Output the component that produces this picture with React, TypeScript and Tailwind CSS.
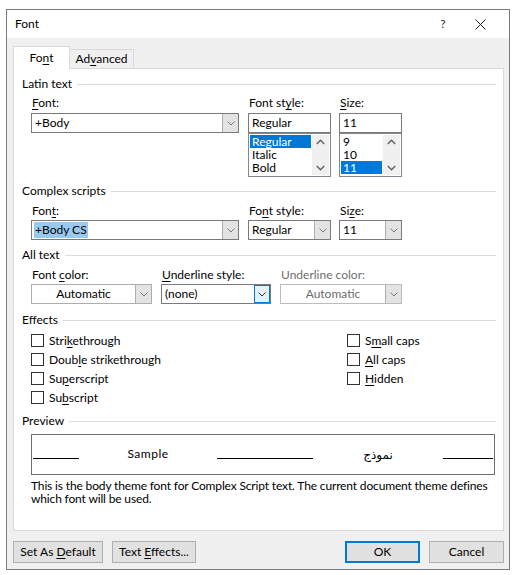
import React from "react";

const U = ({ children }: { children: React.ReactNode }) => (
  <span className="underline underline-offset-[2px] decoration-1">{children}</span>
);

const Chevron = ({ up = false, color = "#606060", big = false }: { up?: boolean; color?: string; big?: boolean }) =>
  big ? (
    <svg width="9" height="6" viewBox="0 0 9 6" className="block">
      <path d={up ? "M0.8 5L4.5 1.3L8.2 5" : "M0.8 1L4.5 4.7L8.2 1"} fill="none" stroke={color} strokeWidth="1.4" />
    </svg>
  ) : (
    <svg width="8" height="5" viewBox="0 0 8 5" className="block">
      <path d={up ? "M0.5 4L4 0.5L7.5 4" : "M0.5 0.5L4 4L7.5 0.5"} fill="none" stroke={color} strokeWidth="1" />
    </svg>
  );

interface ComboProps {
  text: string;
  className?: string;
  arrow?: boolean;
  center?: boolean;
  disabled?: boolean;
  focused?: boolean;
  selected?: boolean;
  light?: boolean;
}

const Combo = ({ text, className = "", arrow = true, center, disabled, focused, selected, light }: ComboProps) => (
  <div
    className={`h-[20px] flex bg-white border ${
      disabled ? "border-[#bcbcbc]" : light ? "border-[#adadad]" : "border-[#7a7a7a]"
    } ${className}`}
  >
    <div className={`flex-1 flex items-center ${center ? "justify-center" : "pl-[2px]"} ${disabled ? "text-[#6d6d6d]" : ""}`}>
      <span className={selected ? "bg-[#99c9ef] px-[1px] leading-[16px]" : "px-[1px]"}>{text}</span>
    </div>
    {arrow && (
      <div
        className={`w-[16px] flex items-center justify-center ${
          focused ? "bg-[#e5f1fb] border border-[#0078d7]" : "bg-[#e3e3e3] border-l border-[#adadad]"
        }`}
      >
        <Chevron color={focused ? "#333333" : "#7a7a7a"} />
      </div>
    )}
  </div>
);

const ListBox = ({ items, sel }: { items: string[]; sel: number }) => (
  <div className="h-[44px] border border-[#828790] bg-white flex">
    <div className="flex-1 pt-[1px] pl-[1px]">
      {items.map((it, i) => (
        <div
          key={it}
          className={`h-[13px] leading-[13px] pl-[2px] ${i === sel ? "bg-[#0078d7] text-white" : ""}`}
        >
          {it}
        </div>
      ))}
    </div>
    <div className="w-[17px] my-[1px] mx-[1px] bg-[#f0f0f0] flex flex-col items-center justify-between py-[4px]">
      <Chevron up big />
      <Chevron big />
    </div>
  </div>
);

const Header = ({ title, className = "" }: { title: string; className?: string }) => (
  <div className={`h-[16px] flex items-center pl-[8px] pr-[7px] ${className}`}>
    <span>{title}</span>
    <div className="flex-1 h-px bg-[#dcdcdc] ml-[5px]" />
  </div>
);

const Label = ({ children, disabled }: { children: React.ReactNode; disabled?: boolean }) => (
  <div className={`h-[16px] flex items-center pl-[1px] ${disabled ? "text-[#6d6d6d]" : ""}`}>
    <span>{children}</span>
  </div>
);

const Check = ({ children }: { children: React.ReactNode }) => (
  <div className="h-[19px] flex items-center">
    <div className="w-[13px] h-[13px] border border-[#333333] bg-white" />
    <span className="ml-[5px]">{children}</span>
  </div>
);

const Btn = ({ children, className = "", primary }: { children: React.ReactNode; className?: string; primary?: boolean }) => (
  <div
    className={`h-[22px] flex items-center justify-center bg-[#e1e1e1] ${
      primary ? "border-2 border-[#0078d7]" : "border border-[#adadad]"
    } ${className}`}
  >
    <span>{children}</span>
  </div>
);

export default function App() {
  return (
    <div className="w-[518px] h-[575px] bg-white pl-[6px] pt-[9px] font-['Lato','Noto_Sans',sans-serif] text-[12px] leading-none text-black">
      <div className="w-[504px] h-[561px] border border-[#7a7a7a] flex flex-col">
        {/* title bar */}
        <div className="h-[28px] bg-white flex items-center pl-[8px] pr-[19px]">
          <span className="flex-1">Font</span>
          <span className="w-[20px] text-center text-[#333333]">?</span>
          <div className="w-[20px] ml-[17px] flex justify-center">
            <svg width="11" height="11" viewBox="0 0 11 11">
              <path d="M0.5 0.5L10.5 10.5M10.5 0.5L0.5 10.5" stroke="#222" strokeWidth="1" />
            </svg>
          </div>
        </div>

        {/* body */}
        <div className="flex-1 bg-[#f0f0f0] pt-[8px] pl-[6px] pr-[5px] flex flex-col">
          {/* tabs */}
          <div className="h-[22px] flex items-end">
            <div className="w-[57px] h-[23px] -mb-px relative z-10 bg-white border-t border-l border-r border-[#d9d9d9] flex items-center justify-center">
              <span>Fo<U>n</U>t</span>
            </div>
            <div className="w-[64px] h-[19px] border-t border-r border-[#d9d9d9] flex items-center justify-center">
              <span>Ad<U>v</U>anced</span>
            </div>
          </div>

          {/* panel */}
          <div className="h-[463px] border border-[#d9d9d9] bg-white flex flex-col">
            <Header title="Latin text" className="mt-[7px]" />
            <div className="flex pl-[17px] mt-[3px]">
              <div className="w-[208px]">
                <Label><U>F</U>ont:</Label>
                <Combo text="+Body" className="mt-[2px]" />
              </div>
              <div className="w-[83px] ml-[9px]">
                <Label>Font st<U>y</U>le:</Label>
                <Combo text="Regular" arrow={false} className="mt-[2px]" />
                <ListBox items={["Regular", "Italic", "Bold"]} sel={0} />
              </div>
              <div className="w-[63px] ml-[8px]">
                <Label><U>S</U>ize:</Label>
                <Combo text="11" arrow={false} className="mt-[2px]" />
                <ListBox items={["9", "10", "11"]} sel={2} />
              </div>
            </div>

            <Header title="Complex scripts" className="mt-[6px]" />
            <div className="flex pl-[17px] mt-[4px]">
              <div className="w-[208px]">
                <Label>Fon<U>t</U>:</Label>
                <Combo text="+Body CS" selected className="mt-[1px]" />
              </div>
              <div className="w-[83px] ml-[9px]">
                <Label>Fo<U>n</U>t style:</Label>
                <Combo text="Regular" className="mt-[1px]" />
              </div>
              <div className="w-[63px] ml-[8px]">
                <Label>Si<U>z</U>e:</Label>
                <Combo text="11" className="mt-[1px]" />
              </div>
            </div>

            <Header title="All text" className="mt-[7px]" />
            <div className="flex pl-[17px] mt-[4px]">
              <div className="w-[121px]">
                <Label>Font <U>c</U>olor:</Label>
                <Combo text="Automatic" center light className="mt-[1px]" />
              </div>
              <div className="w-[110px] ml-[9px]">
                <Label><U>U</U>nderline style:</Label>
                <Combo text="(none)" focused className="mt-[1px]" />
              </div>
              <div className="w-[122px] ml-[9px]">
                <Label disabled>Underline color:</Label>
                <Combo text="Automatic" center disabled className="mt-[1px]" />
              </div>
            </div>

            <Header title="Effects" className="mt-[8px]" />
            <div className="grid grid-cols-[316px_1fr] pl-[17px] mt-[3px]">
              <div className="flex flex-col">
                <Check>Stri<U>k</U>ethrough</Check>
                <Check>Doub<U>l</U>e strikethrough</Check>
                <Check>Su<U>p</U>erscript</Check>
                <Check>Su<U>b</U>script</Check>
              </div>
              <div className="flex flex-col">
                <Check>S<U>m</U>all caps</Check>
                <Check><U>A</U>ll caps</Check>
                <Check><U>H</U>idden</Check>
              </div>
            </div>

            <Header title="Preview" className="mt-[6px]" />
            <div className="ml-[17px] mt-[5px] w-[464px] h-[41px] border border-[#6e6e6e] flex items-end pb-[15px]">
              <div className="w-[46px] ml-[1px] h-px bg-black" />
              <div className="w-[138px] flex justify-center">
                <span className="-mb-[1px] tracking-[0.5px]">Sample</span>
              </div>
              <div className="w-[96px] h-px bg-black" />
              <div className="w-[130px] flex justify-center">
                <span dir="rtl" className="font-['DejaVu_Sans',sans-serif] text-[12px] -mb-[2px]">
                  نموذج
                </span>
              </div>
              <div className="w-[50px] h-px bg-black" />
            </div>
            <div className="ml-[17px] mt-[4px] leading-[13px] tracking-[-0.15px]">
              This is the body theme font for Complex Script text. The current document theme defines
              <br />
              which font will be used.
            </div>
          </div>

          {/* buttons */}
          <div className="flex mt-[10px]">
            <Btn className="w-[90px]">Set As <U>D</U>efault</Btn>
            <Btn className="w-[84px] ml-[9px]">Text <U>E</U>ffects...</Btn>
            <Btn primary className="w-[75px] ml-auto">OK</Btn>
            <Btn className="w-[75px] ml-[9px]">Cancel</Btn>
          </div>
        </div>
      </div>
    </div>
  );
}
